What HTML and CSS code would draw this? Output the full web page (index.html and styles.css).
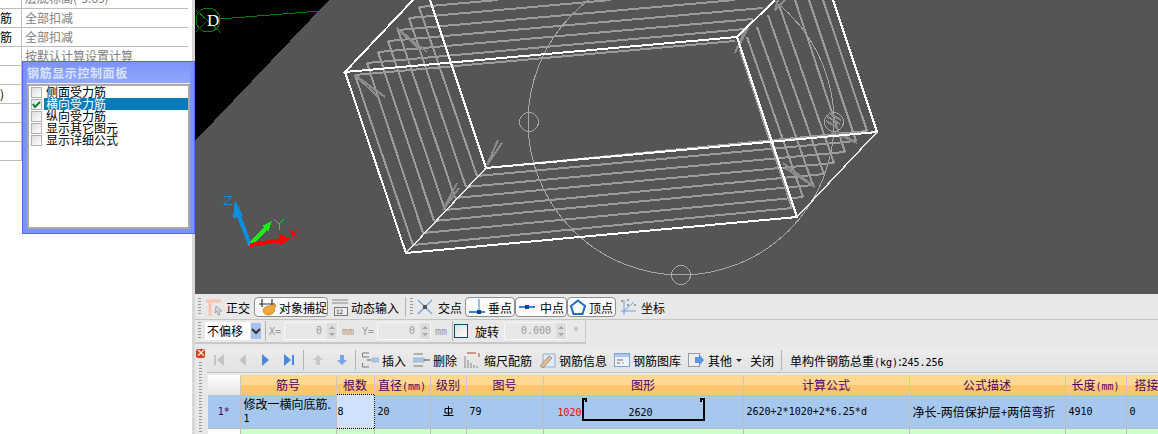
FILE: index.html
```html
<!DOCTYPE html>
<html lang="en">
<head>
<meta charset="UTF-8">
<meta name="viewport" content="width=device-width, initial-scale=1.0">
<title>钢筋显示控制面板</title>
<link rel="stylesheet" href="styles.css">
</head>
<body>
<div class="side">
    <div class="prop-table">
        <div class="prop-row first"><span class="prop-key"></span><span class="prop-val">层底标高(-3.65)</span></div>
        <div class="prop-row"><span class="prop-key">筋</span><span class="prop-val">全部扣减</span></div>
        <div class="prop-row"><span class="prop-key">筋</span><span class="prop-val">全部扣减</span></div>
        <div class="prop-row"><span class="prop-key"></span><span class="prop-val">按默认计算设置计算</span></div>
        <div class="prop-row"><span class="prop-key"></span><span class="prop-val"></span></div>
        <div class="prop-row"><span class="prop-key bracket">)</span><span class="prop-val"></span></div>
        <div class="prop-row"><span class="prop-key"></span><span class="prop-val"></span></div>
        <div class="prop-row"><span class="prop-key"></span><span class="prop-val"></span></div>
        <div class="prop-row"><span class="prop-key"></span><span class="prop-val"></span></div>
    </div>
    <div class="float-panel">
        <div class="float-title">钢筋显示控制面板</div>
        <ul class="check-list">
            <li><span class="check"></span><span class="check-text">侧面受力筋</span></li>
            <li class="selected"><span class="check"><svg width="9" height="9" viewBox="0 0 9 9"><path d="M1 4l2 3 5-5" fill="none" stroke="#0a7f2e" stroke-width="2"/></svg></span><span class="check-text">横向受力筋</span></li>
            <li><span class="check"></span><span class="check-text">纵向受力筋</span></li>
            <li><span class="check"></span><span class="check-text">显示其它图元</span></li>
            <li><span class="check"></span><span class="check-text">显示详细公式</span></li>
        </ul>
    </div>
</div>

<div class="main">
    <div class="view">
        <svg class="scene" width="963" height="294" viewBox="195 0 963 294">
            <polygon points="195,0 329,0 195,141" fill="#000"/>
            <!-- axis bubble -->
            <g fill="none" stroke="#0a7a0a" stroke-width="1">
                <circle cx="208" cy="20" r="12"/>
                <path d="M220 19L320 11M196 10L221 33M196 32L206 22"/>
            </g>
            <text x="207" y="26" class="axis-d">D</text>

            <!-- big circle with grips -->
            <g fill="none" stroke="#a8a8a8" stroke-width="1">
                <circle cx="681" cy="122" r="153"/>
                <circle cx="529" cy="122" r="9.5"/>
                <circle cx="681" cy="275" r="9.5"/>
                <circle cx="834" cy="122" r="9.5"/>
            </g>

            <!-- stirrups -->
            <g class="bars" fill="none" stroke="#9c9c9c" stroke-width="2">
                <path d="M355 75L735 41M367 63L745 29M378 52L753 19M388 41L763 8M398 30L735 0M409 18L611 0M419 7L498 0"/>
                <path d="M355 75L413 245M367 63L423 233M378 52L434 221M388 41L445 210M398 30L455 198M409 18L466 187M419 7L477 176"/>
                <path d="M413 245L792 208M423 233L803 197M434 221L813 185M445 210L824 174M455 198L834 163M466 187L845 152M477 176L856 141M486 168L867 131"/>
                <path d="M740 50L792 208M747 37L803 197M757 27L813 185M768 15L824 174M779 5L834 163M795 0L845 152M809 0L856 141M823 0L867 131"/>
            </g>
            <!-- hooks -->
            <g fill="none" stroke="#8c8c8c" stroke-width="2">
                <path d="M385 97L355 75L378 97M427 52L397 28L420 50"/>
                <path d="M498 140L487 165L502 143M457 183L443 210L459 188"/>
                <path d="M783 163L815 187L785 168M838 132L857 143L835 133"/>
                <path d="M748 28L735 53L745 30M778 0L775 10L785 0"/>
                <path d="M826 121L838 128M826 116L840 124M829 113L841 120"/>
            </g>

            <!-- outer frame -->
            <g fill="none" stroke="#fff" stroke-width="2">
                <path d="M413 0L345 72L737 37L775 0M737 37L797 217L406 253L345 72"/>
                <path d="M430 0L486 168L877 132L833 0"/>
            </g>
            <g fill="none" stroke="#e6e6e6" stroke-width="1.5">
                <path d="M406 253L486 168M797 217L877 132"/>
            </g>

            <!-- triad -->
            <path d="M250 245L236 208" stroke="#0a8fe0" stroke-width="4"/>
            <polygon points="235,200 243,216 233,218" fill="#0a8fe0"/>
            <path d="M250 245L268 226" stroke="#18f018" stroke-width="4"/>
            <polygon points="272,221 268,232 262,226" fill="#18f018"/>
            <path d="M250 245L282 240" stroke="#f00" stroke-width="4"/>
            <polygon points="291,239 279,234 280,245" fill="#f00"/>
            <g fill="none" stroke-width="1">
                <path d="M224 196H232L224 204H232" stroke="#0a8fe0"/>
                <path d="M274 219L279 224L284 219M279 224V230" stroke="#18e018"/>
                <path d="M288 229L298 238M298 229L288 238" stroke="#f00"/>
            </g>
        </svg>
    </div>

    <div class="bar bar-snap">
        <span class="grip"></span>
        <div class="tool w-ortho">
            <svg width="18" height="18" viewBox="0 0 18 18"><path d="M0 3H15M4 3V18" stroke="#f7c5b2" stroke-width="3" fill="none"/><path d="M10 8l6 5-3 0 1 4-2 0-1-4-2 2z" fill="#d8d8d8" stroke="#8a8a8a" stroke-width=".6"/></svg>
            <span>正交</span>
        </div>
        <div class="tool toggle w-snap">
            <svg width="20" height="18" viewBox="0 0 20 18"><path d="M1 6H17M4 1V9M14 1V9" stroke="#333" stroke-width="1.2" fill="none"/><path d="M5 13c0-3 3-5 6-5l6-2 1 3-2 1 1 3-3 3c-3 2-8 1-9-3z" fill="#f0a83c" stroke="#b97a1a" stroke-width=".6"/></svg>
            <span>对象捕捉</span>
        </div>
        <div class="tool w-dyn">
            <svg width="16" height="18" viewBox="0 0 16 18"><path d="M0 2H16M0 5H16" stroke="#888" fill="none"/><rect x="2.500" y="9.500" width="13" height="8" fill="#eee" stroke="#777"/><text x="4" y="16" class="icon-num">12</text></svg>
            <span>动态输入</span>
        </div>
        <span class="sep"></span>
        <span class="grip"></span>
        <div class="tool w-cross">
            <svg width="16" height="16" viewBox="0 0 16 16"><path d="M1 1L15 15M15 1L1 15" stroke="#6aa4ec" stroke-width="1.3"/><rect x="6" y="6" width="4" height="4" fill="#555"/></svg>
            <span>交点</span>
        </div>
        <div class="toggle-group">
            <div class="tool toggle w-perp">
                <svg width="16" height="16" viewBox="0 0 16 16"><path d="M0 13H16" stroke="#3c82d8" stroke-width="2"/><path d="M10 0V13" stroke="#3c82d8"/><rect x="8" y="11" width="4" height="4" fill="#123c96"/></svg>
                <span>垂点</span>
            </div>
            <div class="tool toggle w-mid">
                <svg width="16" height="16" viewBox="0 0 16 16"><path d="M0 8H16" stroke="#3c82d8" stroke-width="2"/><rect x="6" y="6" width="4" height="4" fill="#123c96"/></svg>
                <span>中点</span>
            </div>
            <div class="tool toggle w-vert">
                <svg width="16" height="16" viewBox="0 0 16 16"><polygon points="8,1.500 15,7 12.500,15 3.500,15 1,7" fill="#fff" stroke="#1f6cc8" stroke-width="2"/></svg>
                <span>顶点</span>
            </div>
        </div>
        <div class="tool w-coord">
            <svg width="17" height="17" viewBox="0 0 17 17"><path d="M4 1V16M1 12H16M4 12L14 3" stroke="#6aa4ec" fill="none"/><path d="M1 2h2M7 1h2M14 6h2M7 6h2" stroke="#555"/></svg>
            <span>坐标</span>
        </div>
    </div>

    <div class="bar bar-offset">
        <span class="grip"></span>
        <div class="combo"><span class="combo-text">不偏移</span><span class="combo-btn"><svg width="10" height="8" viewBox="0 0 10 8"><path d="M1 2l4 4 4-4" fill="none" stroke="#333" stroke-width="2"/></svg></span></div>
        <span class="sep"></span>
        <span class="lat dim lbl-x">X=</span>
        <div class="spin w-num"><span class="spin-val lat">0</span><span class="spin-btn"><svg width="10" height="16" viewBox="0 0 10 16"><path d="M2 6l3-3 3 3zM2 10l3 3 3-3z" fill="#a8a8a8"/></svg></span></div>
        <span class="lat dim lbl-mm">mm</span>
        <span class="lat dim lbl-y">Y=</span>
        <div class="spin w-num"><span class="spin-val lat">0</span><span class="spin-btn"><svg width="10" height="16" viewBox="0 0 10 16"><path d="M2 6l3-3 3 3zM2 10l3 3 3-3z" fill="#a8a8a8"/></svg></span></div>
        <span class="lat dim lbl-mm">mm</span>
        <span class="sep"></span>
        <span class="square"></span>
        <span class="rot-label">旋转</span>
        <div class="spin w-rot"><span class="spin-val lat">0.000</span><span class="spin-btn"><svg width="10" height="16" viewBox="0 0 10 16"><path d="M2 6l3-3 3 3zM2 10l3 3 3-3z" fill="#a8a8a8"/></svg></span></div>
        <span class="lat dim lbl-deg">°</span>
    </div>

    <div class="lower">
        <div class="gutter">
            <span class="close-x">×</span>
            <span class="gutter-grip"></span>
        </div>
        <div class="lower-main">
            <div class="bar bar-grid">
                <svg class="nav" width="14" height="14" viewBox="0 0 14 14"><path d="M2 2h2v10H2z M12 1v12L5 7z" fill="#c4c4c4"/></svg>
                <svg class="nav" width="10" height="14" viewBox="0 0 10 14"><path d="M8 1v12L1 7z" fill="#c4c4c4"/></svg>
                <svg class="nav" width="10" height="14" viewBox="0 0 10 14"><path d="M2 1v12l7-6z" fill="#4a86e0"/></svg>
                <svg class="nav" width="14" height="14" viewBox="0 0 14 14"><path d="M2 1v12l7-6z M10 2h2v10h-2z" fill="#4a86e0"/></svg>
                <span class="sep sep-nav"></span>
                <svg class="nav" width="12" height="12" viewBox="0 0 12 12"><path d="M6 1l5 5H8v5H4V6H1z" fill="#c8c8c8"/></svg>
                <svg class="nav" width="12" height="12" viewBox="0 0 12 12"><path d="M6 11l5-5H8V1H4v5H1z" fill="#7aa4e8"/></svg>
                <span class="sep sep-nav"></span>
                <div class="tool w-ins">
                    <svg width="17" height="16" viewBox="0 0 17 16"><path d="M0.500 1H7M0.500 15H7M0.500 1V5H7M0.500 11V15" stroke="#777" fill="none"/><path d="M5 8H9" stroke="#555"/><rect x="10" y="6" width="7" height="4" fill="#a8c8f0" stroke="#7a9ac8" stroke-width=".5"/></svg>
                    <span>插入</span>
                </div>
                <div class="tool w-del">
                    <svg width="17" height="16" viewBox="0 0 17 16"><path d="M0.500 2H10M0.500 14H10" stroke="#777" fill="none"/><rect x="0" y="6" width="11" height="4" fill="#a8c8f0" stroke="#7a9ac8" stroke-width=".5"/><path d="M11 8H17" stroke="#444"/></svg>
                    <span>删除</span>
                </div>
                <div class="tool w-scale">
                    <svg width="16" height="16" viewBox="0 0 16 16"><path d="M1 4V16M4 8V16M7 11V16M10 13V16M13 14V16" stroke="#888"/><path d="M3 1H12M15 1V5" stroke="#b04030"/></svg>
                    <span>缩尺配筋</span>
                </div>
                <div class="tool w-info">
                    <svg width="16" height="16" viewBox="0 0 16 16"><rect x="3" y="2" width="12" height="13" fill="#dfeafa" stroke="#9ab0cc"/><path d="M0 14L9 4l3 2-9 10z" fill="#e8b98a" stroke="#777" stroke-width=".6"/></svg>
                    <span>钢筋信息</span>
                </div>
                <div class="tool w-lib">
                    <svg width="16" height="16" viewBox="0 0 16 16"><rect x="0.500" y="1.500" width="15" height="13" fill="#eef4fc" stroke="#7ea4d4"/><rect x="1" y="2" width="14" height="3" fill="#a8c8f0"/><path d="M3 8h6M3 11h3" stroke="#666"/><path d="M8 11h2" stroke="#d88"/></svg>
                    <span>钢筋图库</span>
                </div>
                <div class="tool w-other">
                    <svg width="16" height="16" viewBox="0 0 16 16"><rect x="0.500" y="1.500" width="11" height="13" fill="#eee" stroke="#999"/><path d="M7 5h4V2l5 6-5 6v-3H7z" fill="#5a96e4"/></svg>
                    <span>其他</span>
                    <span class="caret"></span>
                </div>
                <span class="close-label">关闭</span>
                <span class="sep sep-close"></span>
                <span class="total">单构件钢筋总重<span class="lat">(kg)</span>:<span class="lat">245.256</span></span>
            </div>

            <table class="grid">
                <colgroup>
                    <col class="c-num"><col class="c-name"><col class="c-count"><col class="c-dia"><col class="c-grade"><col class="c-code">
                    <col class="c-shape"><col class="c-formula"><col class="c-desc"><col class="c-len"><col class="c-lap">
                </colgroup>
                <thead>
                    <tr>
                        <th></th><th>筋号</th><th>根数</th><th>直径<span class="lat">(mm)</span></th><th>级别</th><th>图号</th>
                        <th>图形</th><th>计算公式</th><th>公式描述</th><th>长度<span class="lat">(mm)</span></th><th class="th-lap">搭接</th>
                    </tr>
                </thead>
                <tbody>
                    <tr class="row-active">
                        <td class="row-head lat">1*</td>
                        <td class="name-cell">修改一横向底筋.<br><span class="lat">1</span></td>
                        <td class="edit-cell lat">8</td>
                        <td class="lat">20</td>
                        <td class="grade-cell"><svg class="grade-mark" width="11" height="11" viewBox="0 0 11 11"><path d="M2 2.500H9V7H2zM5.500 0V9M0.500 9.500H10.500" fill="none" stroke="#000"/></svg></td>
                        <td class="lat">79</td>
                        <td class="shape-cell">
                            <div class="shape-wrap">
                                <span class="lat shape-side">1020</span>
                                <svg class="shape-line" width="126" height="26" viewBox="0 0 126 26">
                                    <path d="M6 5V2H3V23H124V2H121V5" fill="none" stroke="#000" stroke-width="2"/>
                                </svg>
                                <span class="lat shape-mid">2620</span>
                            </div>
                        </td>
                        <td class="lat">2620+2*1020+2*6.25*d</td>
                        <td>净长-两倍保护层+两倍弯折</td>
                        <td class="lat">4910</td>
                        <td class="lat">0</td>
                    </tr>
                    <tr class="row-next">
                        <td class="row-head"></td><td></td><td></td><td></td><td></td><td></td><td></td><td></td><td></td><td></td><td></td>
                    </tr>
                </tbody>
            </table>
        </div>
    </div>
</div>
</body>
</html>
```

FILE: styles.css
```css
body {
    margin: 0;
    width: 1158px;
    height: 434px;
    overflow: hidden;
    display: flex;
    font-family: "Noto Sans CJK SC", "Liberation Sans", sans-serif;
    font-size: 12px;
    color: #000;
    background-color: #e8e8e8;
}
svg {
    display: block;
    flex: none;
}
.lat {
    font-family: "DejaVu Sans Mono", "Liberation Mono", monospace;
    font-size: 10px;
}

/* left property list */
.side {
    position: relative;
    width: 192px;
    height: 434px;
    background-color: #fff;
    border-right: 3px solid #d8d8d8;
    flex: none;
}
.prop-row {
    display: flex;
    height: 18px;
    line-height: 18px;
    border-bottom: 1px solid #bdbdbd;
    width: 188px;
    overflow: hidden;
}
.prop-row.first {
    height: 8px;
}
.prop-row.first .prop-val {
    margin-top: -11px;
}
.prop-key {
    width: 22px;
    flex: none;
    box-sizing: border-box;
    padding-right: 10px;
    text-align: right;
    white-space: nowrap;
    border-right: 1px solid #bdbdbd;
}
.prop-key.bracket {
    padding-right: 18px;
}
.prop-val {
    padding-left: 3px;
    color: #808080;
    white-space: nowrap;
}

/* floating panel */
.float-panel {
    position: absolute;
    left: 22px;
    top: 61px;
    width: 173px;
    height: 173px;
    box-sizing: border-box;
    padding: 0 4px 4px;
    background-color: #7b93fb;
    border: 1px solid #5566f0;
}
.float-title {
    height: 21px;
    line-height: 22px;
    font-weight: bold;
    letter-spacing: 0.6px;
    color: #d9e2ff;
    background: linear-gradient(#7b93fb, #93a8fc);
    border-bottom: 1px solid #e8edff;
}
.check-list {
    list-style: none;
    margin: 0;
    padding: 0 0 0 2px;
    height: 145px;
    box-sizing: border-box;
    background-color: #fff;
    border: 2px solid #aaa;
}
.check-list li {
    display: flex;
    align-items: center;
    height: 12px;
    line-height: 12px;
}
.check {
    width: 9px;
    height: 9px;
    flex: none;
    border: 1px solid #b0b0b0;
    background: linear-gradient(135deg, #ddd, #fff);
    margin-right: 2px;
}
.check-text {
    flex: 1;
    padding-left: 2px;
}
.selected .check-text {
    background-color: #0a7ab8;
    color: #fff;
}

/* main column */
.main {
    flex: 1;
    min-width: 0;
    display: flex;
    flex-direction: column;
}
.view {
    height: 294px;
    background-color: #555;
    overflow: hidden;
}
.scene {
    shape-rendering: crispEdges;
}
.axis-d {
    font-family: "Liberation Serif", serif;
    font-size: 17px;
    fill: #fff;
}
.icon-num {
    font-family: "DejaVu Sans Mono", monospace;
    font-size: 6px;
    fill: #333;
}

/* toolbars */
.bar {
    display: flex;
    align-items: center;
    gap: 4px;
    box-sizing: border-box;
}
.bar-snap {
    height: 26px;
    padding: 1px 0 0 3px;
    border-bottom: 1px solid #c4c4c4;
}
.bar-offset {
    height: 24px;
    width: 391px;
    padding-left: 3px;
    border-bottom: 2px solid #c8c8c8;
    border-right: 1px solid #c8c8c8;
}
.grip {
    width: 3px;
    height: 18px;
    flex: none;
    background: repeating-linear-gradient(#999 0 1px, #e8e8e8 1px 3px);
}
.sep {
    width: 1px;
    height: 20px;
    flex: none;
    background-color: #b4b4b4;
}
.tool {
    display: flex;
    align-items: center;
    gap: 3px;
    height: 20px;
    flex: none;
    box-sizing: border-box;
    white-space: nowrap;
}
.toggle {
    background-color: #fafafa;
    border: 1px solid #8e8e8e;
    border-radius: 4px;
    padding-left: 3px;
}
.toggle-group {
    display: flex;
    flex: none;
}
.w-ortho { width: 45px; gap: 2px; padding-left: 1px; }
.w-snap { width: 74px; gap: 1px; }
.w-dyn { width: 69px; }
.w-cross { width: 44px; gap: 5px; }
.w-perp { width: 50px; }
.w-mid { width: 52px; padding-left: 3px; gap: 5px; }
.w-vert { width: 49px; padding-left: 2px; }
.w-coord { width: 45px; gap: 4px; }

.combo {
    display: flex;
    align-items: center;
    flex: none;
    height: 18px;
}
.combo-text {
    width: 45px;
    height: 18px;
    line-height: 17px;
    padding-left: 2px;
    box-sizing: border-box;
    background-color: #fff;
}
.combo-btn {
    width: 10px;
    height: 16px;
    margin-left: 1px;
    display: flex;
    align-items: center;
    justify-content: center;
    background-color: #a9c1f2;
}
.dim {
    color: #9a9a9a;
    flex: none;
}
.lbl-x { width: 12px; margin-left: -1px; margin-right: -1px; }
.lbl-y { width: 12px; margin-left: 3px; margin-right: -1px; }
.lbl-mm { width: 12px; margin-right: 1px; }
.lbl-deg { margin-left: 2px; }
.spin {
    display: flex;
    flex: none;
    height: 18px;
    box-sizing: border-box;
    border: 1px solid #f6f6f6;
}
.w-num { width: 54px; }
.w-rot { width: 63px; margin-left: 1px; }
.spin-val {
    flex: 1;
    text-align: right;
    padding-right: 5px;
    line-height: 16px;
    color: #9a9a9a;
}
.spin-btn {
    width: 10px;
    background-color: #dcdcdc;
}
.square {
    width: 12px;
    height: 12px;
    flex: none;
    margin-left: -3px;
    margin-right: 3px;
    border: 1px solid #0a4a7a;
    background: linear-gradient(135deg, #ddd, #fff);
}
.rot-label {
    flex: none;
}

/* grid section */
.lower {
    flex: 1;
    min-height: 0;
    display: flex;
    margin-top: 4px;
}
.gutter {
    width: 11px;
    margin-right: 1px;
    flex: none;
    display: flex;
    flex-direction: column;
    align-items: center;
    padding-top: 1px;
}
.close-x {
    width: 9px;
    height: 9px;
    line-height: 8px;
    font-size: 10px;
    font-weight: bold;
    text-align: center;
    color: #fff;
    background-color: #d8401c;
    border-radius: 2px;
}
.gutter-grip {
    width: 3px;
    flex: 1;
    margin-top: 4px;
    background: repeating-linear-gradient(#999 0 1px, #e8e8e8 1px 3px);
}
.lower-main {
    flex: 1;
    min-width: 0;
}
.bar-grid {
    height: 25px;
    padding-left: 5px;
    gap: 0;
    background: linear-gradient(#ececec, #e2e2e2);
    border-bottom: 1px solid #c4c4c4;
    white-space: nowrap;
}
.bar-grid .nav { margin-right: 12px; }
.bar-grid .sep-nav { margin-left: -5px; margin-right: 8px; }
.bar-grid .tool { margin-right: 7px; }
.bar-grid .tool.w-ins { margin-left: -2px; }
.w-ins { width: 44px; }
.w-del { width: 44px; }
.w-scale { width: 69px; gap: 4px; }
.w-info { width: 67px; }
.w-lib { width: 67px; }
.w-other { width: 55px; gap: 4px; }
.caret {
    width: 0;
    height: 0;
    border: 3px solid transparent;
    border-top: 3px solid #222;
    margin: 3px 0 0;
}
.close-label { margin-right: 7px; flex: none; }
.sep-close { margin-right: 8px; }
.total { flex: none; }

.grid {
    table-layout: fixed;
    width: 950px;
    margin-top: 2px;
    margin-left: 1px;
    border-collapse: collapse;
    font-size: 12px;
}
.c-num { width: 32px; }
.c-name { width: 96px; }
.c-count { width: 38px; }
.c-dia { width: 56px; }
.c-grade { width: 36px; }
.c-code { width: 77px; }
.c-shape { width: 200px; }
.c-formula { width: 166px; }
.c-desc { width: 156px; }
.c-len { width: 61px; }
.c-lap { width: 62px; }
.grid th {
    height: 19px;
    padding: 0;
    font-weight: normal;
    color: #4b0066;
    white-space: nowrap;
    overflow: hidden;
    background: linear-gradient(#ffd991 50%, #ffc66f 50%);
    border-right: 1px solid #c8c8c8;
}
.grid th:first-child {
    background: linear-gradient(#fff, #e4e4e4);
}
.grid th.th-lap {
    text-align: left;
    padding-left: 8px;
}
.grid td {
    padding: 0 3px;
    box-sizing: border-box;
    border-right: 1px solid #bdbdbd;
    border-bottom: 1px solid #bdbdbd;
    white-space: nowrap;
    overflow: hidden;
}
.row-active td {
    height: 34px;
    background-color: #a6c8ee;
}
.grid .row-head {
    text-align: center;
    color: #4b0066;
}
.name-cell {
    line-height: 13px;
}
.grid .edit-cell {
    padding-left: 1px;
    background-color: #d2e1fb;
    border: 1px dotted #000;
}
.grade-mark {
    margin: 0 auto;
}
.grid .shape-cell {
    padding: 0;
}
.shape-wrap {
    position: relative;
    height: 33px;
}
.shape-side {
    position: absolute;
    left: 14px;
    top: 12px;
    color: #f00;
}
.shape-line {
    position: absolute;
    left: 36px;
    top: 2px;
}
.shape-mid {
    position: absolute;
    left: 85px;
    top: 12px;
}
.row-next td {
    height: 20px;
    background-color: #ccffcc;
}
.row-next .row-head {
    background-color: #fff;
}
```
